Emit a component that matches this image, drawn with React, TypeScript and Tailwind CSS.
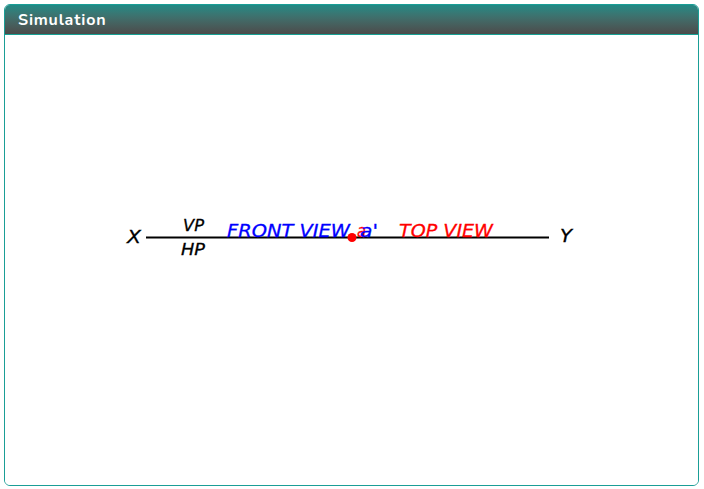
export default function App() {
  const hand = '"Comic Sans MS", "DejaVu Sans", sans-serif'

  return (
    <div className="w-[704px] h-[489px] bg-white pt-1 pl-1">
      <div className="w-[695px] h-[482px] flex flex-col border border-[#1a9e96] rounded-[6px] overflow-hidden">
        {/* Header */}
        <div className="h-[30px] shrink-0 flex items-center px-[13px] bg-gradient-to-b from-[#1e8a85] to-[#4b4b4b] border-b border-[#17a094]">
          <span className="text-white text-[16px] font-bold tracking-[0.8px]" style={{ fontFamily: '"Nunito", "Open Sans", sans-serif' }}>
            Simulation
          </span>
        </div>

        {/* Body */}
        <div className="flex-1 relative bg-white">
          <svg className="absolute inset-0 w-full h-full" viewBox="5 35 693 450" fontFamily={hand} fontStyle="italic" strokeWidth="0.3">
            <line x1="146" y1="237.5" x2="549" y2="237.5" stroke="#000" strokeWidth="2" />
            <text x="127" y="243" fontSize="18" fill="#000" stroke="#000" textLength="14" lengthAdjust="spacingAndGlyphs">X</text>
            <text x="183" y="231" fontSize="16" fill="#000" stroke="#000" textLength="21" lengthAdjust="spacingAndGlyphs">VP</text>
            <text x="181" y="255" fontSize="16" fill="#000" stroke="#000" textLength="24" lengthAdjust="spacingAndGlyphs">HP</text>
            <text x="227" y="237" fontSize="17.5" fill="#0000ff" stroke="#0000ff" textLength="123" lengthAdjust="spacingAndGlyphs">FRONT VIEW</text>
            <text x="357" y="237" fontSize="17.5" fill="#ff0000" stroke="#ff0000" textLength="9" lengthAdjust="spacingAndGlyphs">a</text>
            <text x="360" y="237" fontSize="17.5" fill="#0000ff" stroke="#0000ff" textLength="18" lengthAdjust="spacingAndGlyphs">a'</text>
            <circle cx="352" cy="237.5" r="4.5" fill="#ff0000" />
            <text x="399" y="237" fontSize="17.5" fill="#ff0000" stroke="#ff0000" textLength="94" lengthAdjust="spacingAndGlyphs">TOP VIEW</text>
            <text x="560" y="242" fontSize="17" fill="#000" stroke="#000" textLength="12" lengthAdjust="spacingAndGlyphs">Y</text>
          </svg>
        </div>
      </div>
    </div>
  )
}
